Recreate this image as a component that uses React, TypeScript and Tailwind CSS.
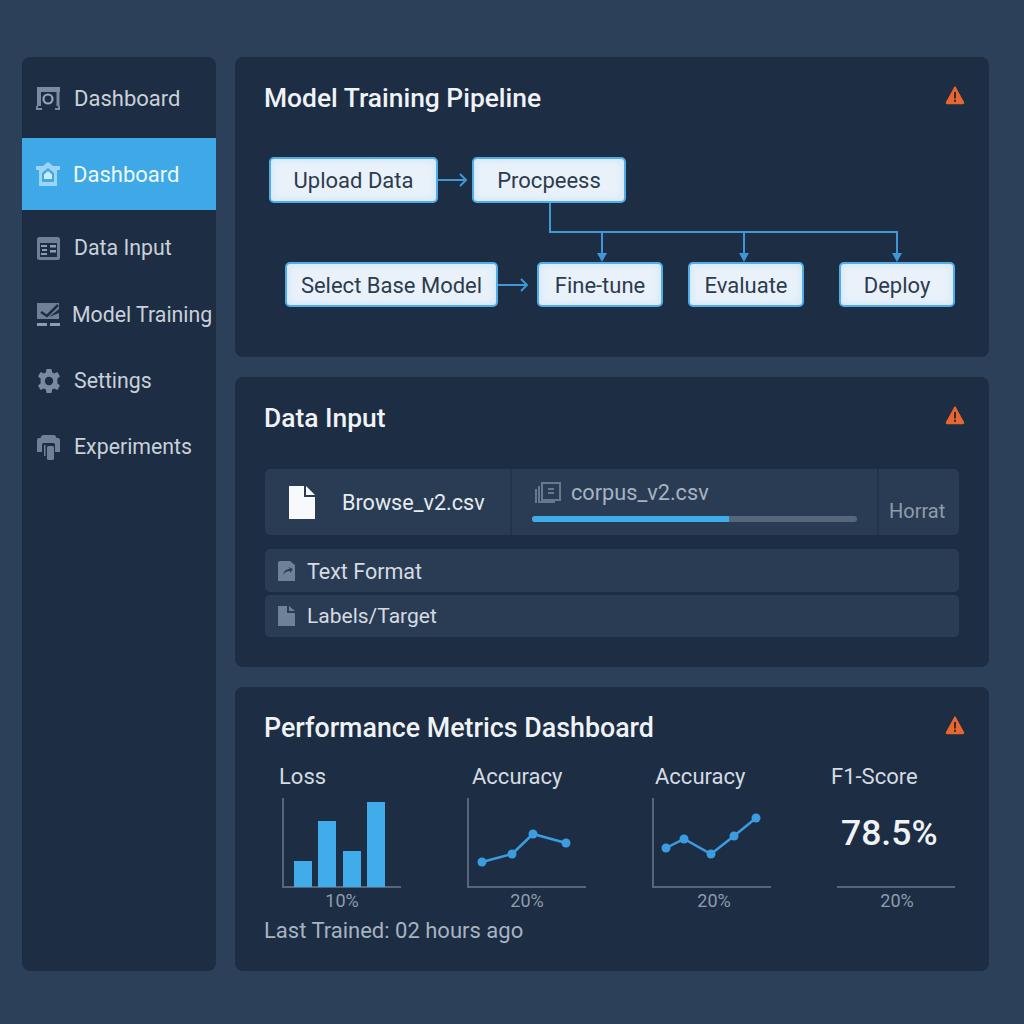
import React from 'react';

const font = { fontFamily: 'Roboto, "Liberation Sans", sans-serif' };

const WarnIcon = () => (
  <svg width="20" height="20" viewBox="0 0 20 20" className="shrink-0">
    <path d="M10 2 L18.5 17.5 a0.8 0.8 0 0 1 -0.7 1 H2.2 a0.8 0.8 0 0 1 -0.7 -1 Z" fill="#e8662f" stroke="#e8662f" strokeWidth="1.5" strokeLinejoin="round" />
    <rect x="9" y="7" width="2" height="6.5" fill="#3a2a2c" />
    <rect x="9" y="14.8" width="2" height="2" fill="#3a2a2c" />
  </svg>
);

const CameraIcon = () => (
  <svg width="24" height="23" viewBox="0 0 24 23" fill="none" className="shrink-0">
    <path d="M1 0 H24 V5 H5 V19 H1 Z" fill="#7b8b9f" />
    <path d="M22 5 V19" stroke="#7b8b9f" strokeWidth="3" />
    <path d="M1 19 V22 H6" stroke="#7b8b9f" strokeWidth="2" />
    <path d="M19 22 H23 V19" stroke="#7b8b9f" strokeWidth="2" />
    <circle cx="12" cy="12" r="4.5" stroke="#97a5b5" strokeWidth="2.2" />
  </svg>
);

const HomeIcon = () => (
  <svg width="24" height="24" viewBox="0 0 24 24" className="shrink-0">
    <path d="M12 0 L17 4 H24 V8 H21 V24 H3 V8 H0 V4 H7 Z" fill="#9bd4f6" />
    <path d="M12 6 L18 11 V20 H6 V11 Z" fill="#3fa9e8" />
    <path d="M12 9 L16 12.5 V17 H8 V12.5 Z" fill="#cfeafb" />
  </svg>
);

const DataIcon = () => (
  <svg width="23" height="23" viewBox="0 0 23 23" className="shrink-0">
    <rect x="0" y="0" width="23" height="23" rx="2.5" fill="#6f8197" />
    <rect x="3" y="6" width="17" height="14" fill="#1c2d44" />
    <rect x="4" y="8" width="6" height="2" fill="#8d9cae" />
    <rect x="5" y="12" width="5" height="2" fill="#8d9cae" />
    <rect x="4" y="16" width="6" height="2" fill="#8d9cae" />
    <rect x="13" y="8" width="6" height="2.5" fill="#8d9cae" />
    <rect x="13" y="13" width="6" height="2.5" fill="#8d9cae" />
  </svg>
);

const TrainIcon = () => (
  <svg width="23" height="24" viewBox="0 0 23 24" className="shrink-0">
    <path d="M0 0 H22 V6 L12 14 L22 10 V16 H0 Z" fill="#6f8197" />
    <path d="M4 9 L10 13 L21 2" stroke="#1c2d44" strokeWidth="2.5" fill="none" />
    <rect x="0" y="20" width="10" height="3" fill="#8d9cae" />
    <rect x="13" y="20" width="10" height="3" fill="#8d9cae" />
  </svg>
);

const GearIcon = () => (
  <svg width="24" height="24" viewBox="0 0 24 24" className="shrink-0">
    <path
      d="M9.5 0 H14.5 L15.2 3.4 L17.2 4.5 L20.4 3.1 L23 7.4 L20.4 9.6 V14.4 L23 16.6 L20.4 20.9 L17.2 19.5 L15.2 20.6 L14.5 24 H9.5 L8.8 20.6 L6.8 19.5 L3.6 20.9 L1 16.6 L3.6 14.4 V9.6 L1 7.4 L3.6 3.1 L6.8 4.5 L8.8 3.4 Z"
      fill="#7b8b9f"
    />
    <circle cx="12" cy="12" r="4.2" fill="#1c2d44" />
  </svg>
);

const ExperimentIcon = () => (
  <svg width="23" height="25" viewBox="0 0 23 25" className="shrink-0">
    <path d="M6 0 H17 C18 0 19 1 19.5 3 H21 C22.5 3 23 4 23 5 V17 H18 V10 C18 8.5 17 8 16 8 H7 C6 8 5 8.5 5 10 V17 H0 V5 C0 4 0.5 3 2 3 H3.5 C4 1 5 0 6 0 Z" fill="#6f8197" />
    <rect x="10" y="11" width="7" height="14" rx="1.5" fill="#6f8197" />
    <rect x="7" y="10" width="1.5" height="11" fill="#6f8197" />
  </svg>
);

const navItems = [
  { label: 'Data Input', icon: <DataIcon />, gap: 'gap-[14px]' },
  { label: 'Model Training', icon: <TrainIcon />, gap: 'gap-[12px]' },
  { label: 'Settings', icon: <GearIcon />, gap: 'gap-[13px]' },
  { label: 'Experiments', icon: <ExperimentIcon />, gap: 'gap-[14px]' },
];

const Sidebar = () => (
  <aside className="w-[194px] h-[914px] shrink-0 rounded-lg bg-[#1c2d44] overflow-hidden">
    <div className="h-[81px] flex items-center gap-[14px] pl-[14px] pt-[1px] text-[22px] text-[#c9d1da]">
      <CameraIcon />
      <span>Dashboard</span>
    </div>
    <div className="h-[72px] flex items-center gap-[13px] pl-[14px] text-[22px] text-[#eef7fd] bg-[#3fa9e8]">
      <HomeIcon />
      <span>Dashboard</span>
    </div>
    <div className="pt-[5px]">
      {navItems.map(item => (
        <div
          key={item.label}
          className={`h-[66.4px] flex items-center ${item.gap} pl-[15px] text-[21.3px] text-[#c9d1da] whitespace-nowrap`}
        >
          {item.icon}
          <span>{item.label}</span>
        </div>
      ))}
    </div>
  </aside>
);

const CardHeader = ({ title, size }: { title: string; size: string }) => (
  <div className="flex items-center justify-between h-[32px]">
    <h2 className={`${size} leading-[32px] font-medium text-[#f0f3f6] -ml-[1px]`}>{title}</h2>
    <div className="-mt-[6px] mr-[-6px]">
      <WarnIcon />
    </div>
  </div>
);

// nodes of the flow chart, placed on its canvas
const nodes = [
  { label: 'Upload Data', box: 'left-[4px] top-[17px] w-[169px] h-[46px]' },
  { label: 'Procpeess', box: 'left-[207px] top-[17px] w-[154px] h-[46px]' },
  { label: 'Select Base Model', box: 'left-[20px] top-[122px] w-[213px] h-[45px] pt-[1px]' },
  { label: 'Fine-tune', box: 'left-[272px] top-[122px] w-[126px] h-[45px] pt-[1px]' },
  { label: 'Evaluate', box: 'left-[423px] top-[122px] w-[116px] h-[45px] pt-[1px]' },
  { label: 'Deploy', box: 'left-[574px] top-[122px] w-[116px] h-[45px] pt-[1px]' },
];

const Pipeline = () => (
  <div className="relative h-[180px] mt-[26px]">
    <svg className="absolute inset-0" width="694" height="180" fill="none" stroke="#3f97d6" strokeWidth="2">
      <path d="M173 40 H200" />
      <path d="M195 34 L201 40 L195 46" />
      <path d="M233 145 H262" />
      <path d="M256 139 L262 145 L256 151" />
      <path d="M285 63 V92 H632 V116" />
      <path d="M337 92 V116" />
      <path d="M479 92 V116" />
      <path d="M332 113 H342 L337 122 Z" fill="#3f97d6" stroke="none" />
      <path d="M474 113 H484 L479 122 Z" fill="#3f97d6" stroke="none" />
      <path d="M627 113 H637 L632 122 Z" fill="#3f97d6" stroke="none" />
    </svg>
    {nodes.map(n => (
      <div
        key={n.label}
        className={`absolute ${n.box} flex items-center justify-center rounded-[5px] border-2 border-[#4fade9] bg-[#e9f2fa] shadow-[inset_0_0_8px_rgba(150,200,240,0.35)] text-[22px] text-[#2d3b4e] whitespace-nowrap`}
      >
        {n.label}
      </div>
    ))}
  </div>
);

const DataInput = () => (
  <div className="mt-[35px]">
    <div className="flex h-[66px] rounded-[5px] bg-[#2a3c54]">
      <div className="w-[247px] flex items-center gap-[27px] pl-[24px] border-r-2 border-[#22344b] text-[21.6px] text-[#e6ebf0]">
        <svg width="26" height="33" viewBox="0 0 26 33">
          <path d="M0 0 H15 V11 H26 V33 H0 Z" fill="#f7f9fb" />
          <path d="M17 0 L26 9 H17 Z" fill="#f7f9fb" />
        </svg>
        <span className="pt-[3px]">Browse_v2.csv</span>
      </div>
      <div className="w-[367px] pl-[20px] pr-[20px] pt-[11px] border-r-2 border-[#22344b]">
        <div className="flex items-center gap-[10px] h-[26px] pl-[3px] text-[21.7px] text-[#a7b3c1]">
          <svg width="26" height="22" viewBox="0 0 26 22" fill="none" stroke="#66788e" strokeWidth="2">
            <rect x="7" y="1" width="18" height="17" />
            <path d="M4 4 V20 H20" />
            <path d="M1 7 V21" />
            <rect x="13" y="6" width="6" height="2" fill="#66788e" stroke="none" />
            <rect x="13" y="10" width="6" height="2" fill="#66788e" stroke="none" />
          </svg>
          <span className="pt-[1px]">corpus_v2.csv</span>
        </div>
        <div className="mt-[10px] h-[6px] w-[325px] rounded-full bg-[#56677c] overflow-hidden">
          <div className="h-full w-[197px] bg-[#40ace9]" />
        </div>
      </div>
      <div className="flex-1 flex items-end pb-[9px] pl-[10px] text-[20px] text-[#8f9cab]">Horrat</div>
    </div>
    <div className="mt-[14px] h-[43px] flex items-center gap-[12px] pl-[13px] pt-[3px] rounded-[5px] bg-[#2a3c54] text-[21.5px] text-[#d5dbe2]">
      <svg width="17" height="20" viewBox="0 0 17 20" className="-mt-[3px]">
        <path d="M0 2 a2 2 0 0 1 2 -2 H12 L17 4 V20 H0 Z" fill="#6f8197" />
        <path d="M5 14 C6 10 8 8 12 8 L10 6 L15 8 L12 12 L12 10 C9 10 7 11 5 14 Z" fill="#2a3c54" />
      </svg>
      <span>Text Format</span>
    </div>
    <div className="mt-[3px] h-[42px] flex items-center gap-[12px] pl-[13px] pt-[1px] rounded-[5px] bg-[#2a3c54] text-[21px] text-[#d5dbe2]">
      <svg width="17" height="20" viewBox="0 0 17 20" className="-mt-[1px]">
        <path d="M0 0 H9 V7 H17 V20 H0 Z" fill="#6f8197" />
        <path d="M11 0 L17 5 H11 Z" fill="#6f8197" />
      </svg>
      <span>Labels/Target</span>
    </div>
  </div>
);

const Axes = ({ children }: { children?: React.ReactNode }) => (
  <svg width="120" height="90" viewBox="0 0 120 90" fill="none">
    <path d="M1 0 V89 H119" stroke="#56677c" strokeWidth="2" />
    {children}
  </svg>
);

const LineChart = ({ points }: { points: number[][] }) => (
  <Axes>
    <polyline points={points.map(p => p.join(',')).join(' ')} stroke="#3b9de0" strokeWidth="2.5" />
    {points.map(([x, y], i) => (
      <circle key={i} cx={x} cy={y} r="4.5" fill="#3b9de0" />
    ))}
  </Axes>
);

const Metric = ({ label, labelClass, value, valueClass = '', children }: { label: string; labelClass: string; value: string; valueClass?: string; children: React.ReactNode }) => (
  <div>
    <div className={`h-[26px] text-[22px] leading-[26px] text-[#d5dbe2] whitespace-nowrap ${labelClass}`}>{label}</div>
    <div className="mt-[8px] h-[90px]">{children}</div>
    <div className={`mt-[3px] w-[120px] text-center text-[18px] leading-[20px] text-[#8f9cab] ${valueClass}`}>{value}</div>
  </div>
);

const Metrics = () => (
  <div>
    <div className="mt-[20px] pl-[17px] grid grid-cols-[185px_185px_185px_118px]">
      <Metric label="Loss" labelClass="-ml-[3px]" value="10%">
        <Axes>
          <rect x="12" y="63" width="18" height="26" fill="#40ace9" />
          <rect x="36" y="23" width="18" height="66" fill="#40ace9" />
          <rect x="61" y="53" width="18" height="36" fill="#40ace9" />
          <rect x="85" y="4" width="18" height="85" fill="#40ace9" />
        </Axes>
      </Metric>
      <Metric label="Accuracy" labelClass="ml-[5px]" value="20%">
        <LineChart points={[[15, 64], [45, 56], [66, 36], [99, 45]]} />
      </Metric>
      <Metric label="Accuracy" labelClass="ml-[3px]" value="20%" valueClass="ml-[2px]">
        <LineChart points={[[14, 50], [32, 41], [59, 56], [82, 38], [104, 20]]} />
      </Metric>
      <Metric label="F1-Score" labelClass="-ml-[6px]" value="20%">
        <div className="relative h-[90px] w-[118px]">
          <div className="text-[35.5px] leading-[40px] pt-[15px] pl-[4px] font-medium text-[#f0f3f6] whitespace-nowrap">78.5%</div>
          <div className="absolute bottom-0 left-0 right-0 h-[2px] bg-[#56677c]" />
        </div>
      </Metric>
    </div>
    <div className="mt-[7px] -ml-[1px] text-[22px] leading-[26px] text-[#a7b3c1]">Last Trained: 02 hours ago</div>
  </div>
);

export default function App() {
  return (
    <div style={font} className="w-[1024px] h-[1024px] bg-[#2c405a] flex gap-[19px] pt-[57px] pl-[22px] overflow-hidden">
      <Sidebar />
      <main className="w-[754px] flex flex-col gap-[20px]">
        <section className="h-[300px] rounded-lg bg-[#1c2d44] px-[30px] pt-[25px]">
          <CardHeader title="Model Training Pipeline" size="text-[26.4px]" />
          <Pipeline />
        </section>
        <section className="h-[290px] rounded-lg bg-[#1c2d44] px-[30px] pt-[25px]">
          <CardHeader title="Data Input" size="text-[26.4px]" />
          <DataInput />
        </section>
        <section className="h-[284px] rounded-lg bg-[#1c2d44] px-[30px] pt-[25px]">
          <CardHeader title="Performance Metrics Dashboard" size="text-[26.8px]" />
          <Metrics />
        </section>
      </main>
    </div>
  );
}
